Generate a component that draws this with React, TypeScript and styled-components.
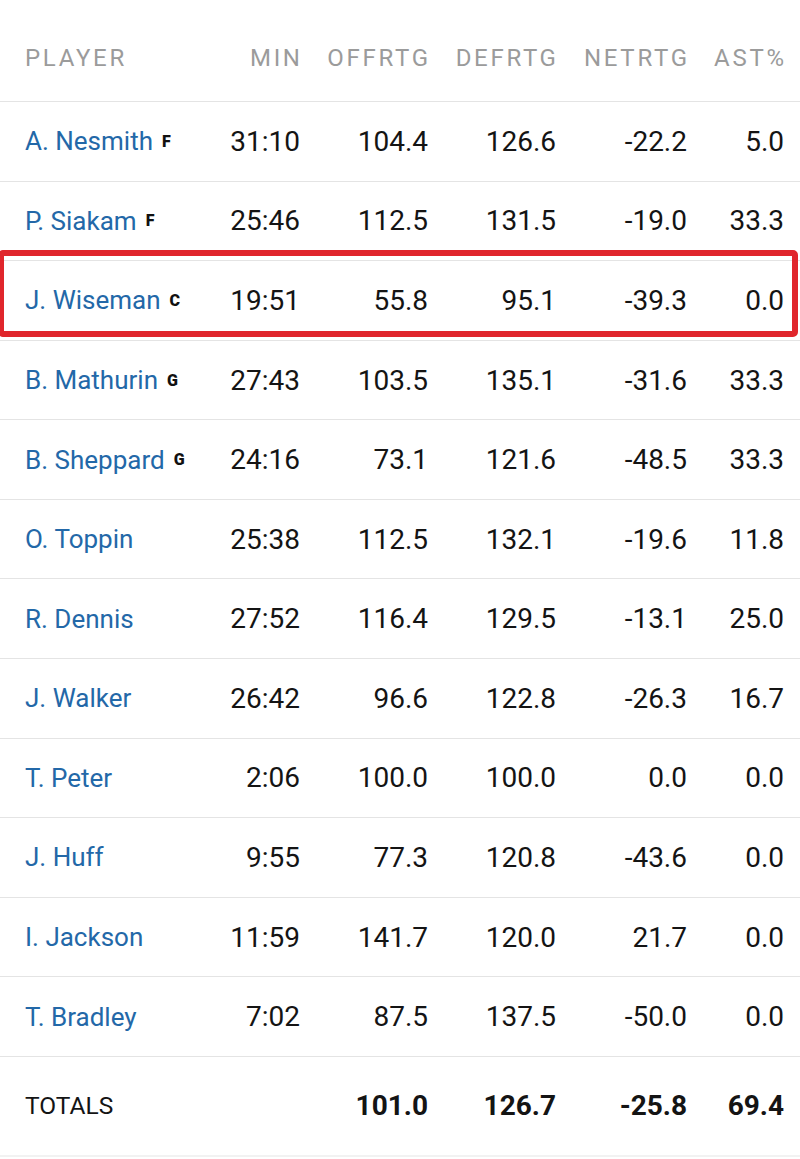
import styled, { createGlobalStyle } from 'styled-components';

const GlobalStyle = createGlobalStyle`
  html, body {
    margin: 0;
    padding: 0;
    background: #ffffff;
  }
  body {
    font-family: Roboto, "Liberation Sans", sans-serif;
    -webkit-font-smoothing: antialiased;
  }
`;

type Player = {
  name: string;
  pos?: string;
  min: string;
  off: string;
  def: string;
  net: string;
  ast: string;
  highlight?: boolean;
};

const players: Player[] = [
  { name: 'A. Nesmith', pos: 'F', min: '31:10', off: '104.4', def: '126.6', net: '-22.2', ast: '5.0' },
  { name: 'P. Siakam', pos: 'F', min: '25:46', off: '112.5', def: '131.5', net: '-19.0', ast: '33.3' },
  { name: 'J. Wiseman', pos: 'C', min: '19:51', off: '55.8', def: '95.1', net: '-39.3', ast: '0.0', highlight: true },
  { name: 'B. Mathurin', pos: 'G', min: '27:43', off: '103.5', def: '135.1', net: '-31.6', ast: '33.3' },
  { name: 'B. Sheppard', pos: 'G', min: '24:16', off: '73.1', def: '121.6', net: '-48.5', ast: '33.3' },
  { name: 'O. Toppin', min: '25:38', off: '112.5', def: '132.1', net: '-19.6', ast: '11.8' },
  { name: 'R. Dennis', min: '27:52', off: '116.4', def: '129.5', net: '-13.1', ast: '25.0' },
  { name: 'J. Walker', min: '26:42', off: '96.6', def: '122.8', net: '-26.3', ast: '16.7' },
  { name: 'T. Peter', min: '2:06', off: '100.0', def: '100.0', net: '0.0', ast: '0.0' },
  { name: 'J. Huff', min: '9:55', off: '77.3', def: '120.8', net: '-43.6', ast: '0.0' },
  { name: 'I. Jackson', min: '11:59', off: '141.7', def: '120.0', net: '21.7', ast: '0.0' },
  { name: 'T. Bradley', min: '7:02', off: '87.5', def: '137.5', net: '-50.0', ast: '0.0' },
];

// player, MIN, OFFRTG, DEFRTG, NETRTG, AST%
const columns = '155px 120px 128px 128px 131px 97px';

const Table = styled.div`
  width: 800px;
  display: flex;
  flex-direction: column;
`;

const HeaderRow = styled.div`
  display: grid;
  grid-template-columns: ${columns};
  align-items: center;
  height: 102px;
  padding: 14px 16px 0 25px;
  box-sizing: border-box;
  border-bottom: 1px solid #e4e4e4;
`;

const HeaderCell = styled.div<{ $left?: boolean }>`
  font-size: 24px;
  letter-spacing: 2.7px;
  color: #9b9b9b;
  text-align: ${p => (p.$left ? 'left' : 'right')};
  margin-right: ${p => (p.$left ? '0' : '-2.7px')};
  white-space: nowrap;
`;

const Row = styled.div`
  position: relative;
  display: grid;
  grid-template-columns: ${columns};
  align-items: center;
  height: 79.58px;
  padding: 0 16px 0 25px;
  box-sizing: border-box;
  border-bottom: 1px solid #e4e4e4;
`;

const Highlight = styled.div`
  position: absolute;
  left: -2px;
  right: 2px;
  top: -11px;
  bottom: 3px;
  border: 6px solid #e0262c;
  border-radius: 5px;
  pointer-events: none;
`;

const NameCell = styled.div`
  display: flex;
  align-items: center;
  white-space: nowrap;
  min-width: 0;
`;

const Name = styled.span`
  font-size: 26px;
  color: #2368a8;
`;

const Pos = styled.span`
  margin-left: 9px;
  font-size: 16px;
  font-weight: 900;
  color: #111;
`;

const Cell = styled.div<{ $bold?: boolean }>`
  font-size: 28px;
  font-weight: ${p => (p.$bold ? 700 : 400)};
  color: #141414;
  text-align: right;
  white-space: nowrap;
`;

const TotalsRow = styled.div`
  display: grid;
  grid-template-columns: ${columns};
  align-items: center;
  height: 100px;
  padding: 0 16px 0 25px;
  box-sizing: border-box;
  border-bottom: 2px solid #f2f2f2;
`;

const TotalsLabel = styled.div`
  font-size: 24.5px;
  color: #141414;
`;

const App = () => {
  return (
    <>
      <GlobalStyle />
      <Table>
        <HeaderRow>
          <HeaderCell $left>PLAYER</HeaderCell>
          <HeaderCell>MIN</HeaderCell>
          <HeaderCell>OFFRTG</HeaderCell>
          <HeaderCell>DEFRTG</HeaderCell>
          <HeaderCell>NETRTG</HeaderCell>
          <HeaderCell>AST%</HeaderCell>
        </HeaderRow>
        {players.map(p => (
          <Row key={p.name}>
            <NameCell>
              <Name>{p.name}</Name>
              {p.pos && <Pos>{p.pos}</Pos>}
            </NameCell>
            <Cell>{p.min}</Cell>
            <Cell>{p.off}</Cell>
            <Cell>{p.def}</Cell>
            <Cell>{p.net}</Cell>
            <Cell>{p.ast}</Cell>
            {p.highlight && <Highlight />}
          </Row>
        ))}
        <TotalsRow>
          <TotalsLabel>TOTALS</TotalsLabel>
          <Cell />
          <Cell $bold>101.0</Cell>
          <Cell $bold>126.7</Cell>
          <Cell $bold>-25.8</Cell>
          <Cell $bold>69.4</Cell>
        </TotalsRow>
      </Table>
    </>
  );
};

export default App;
